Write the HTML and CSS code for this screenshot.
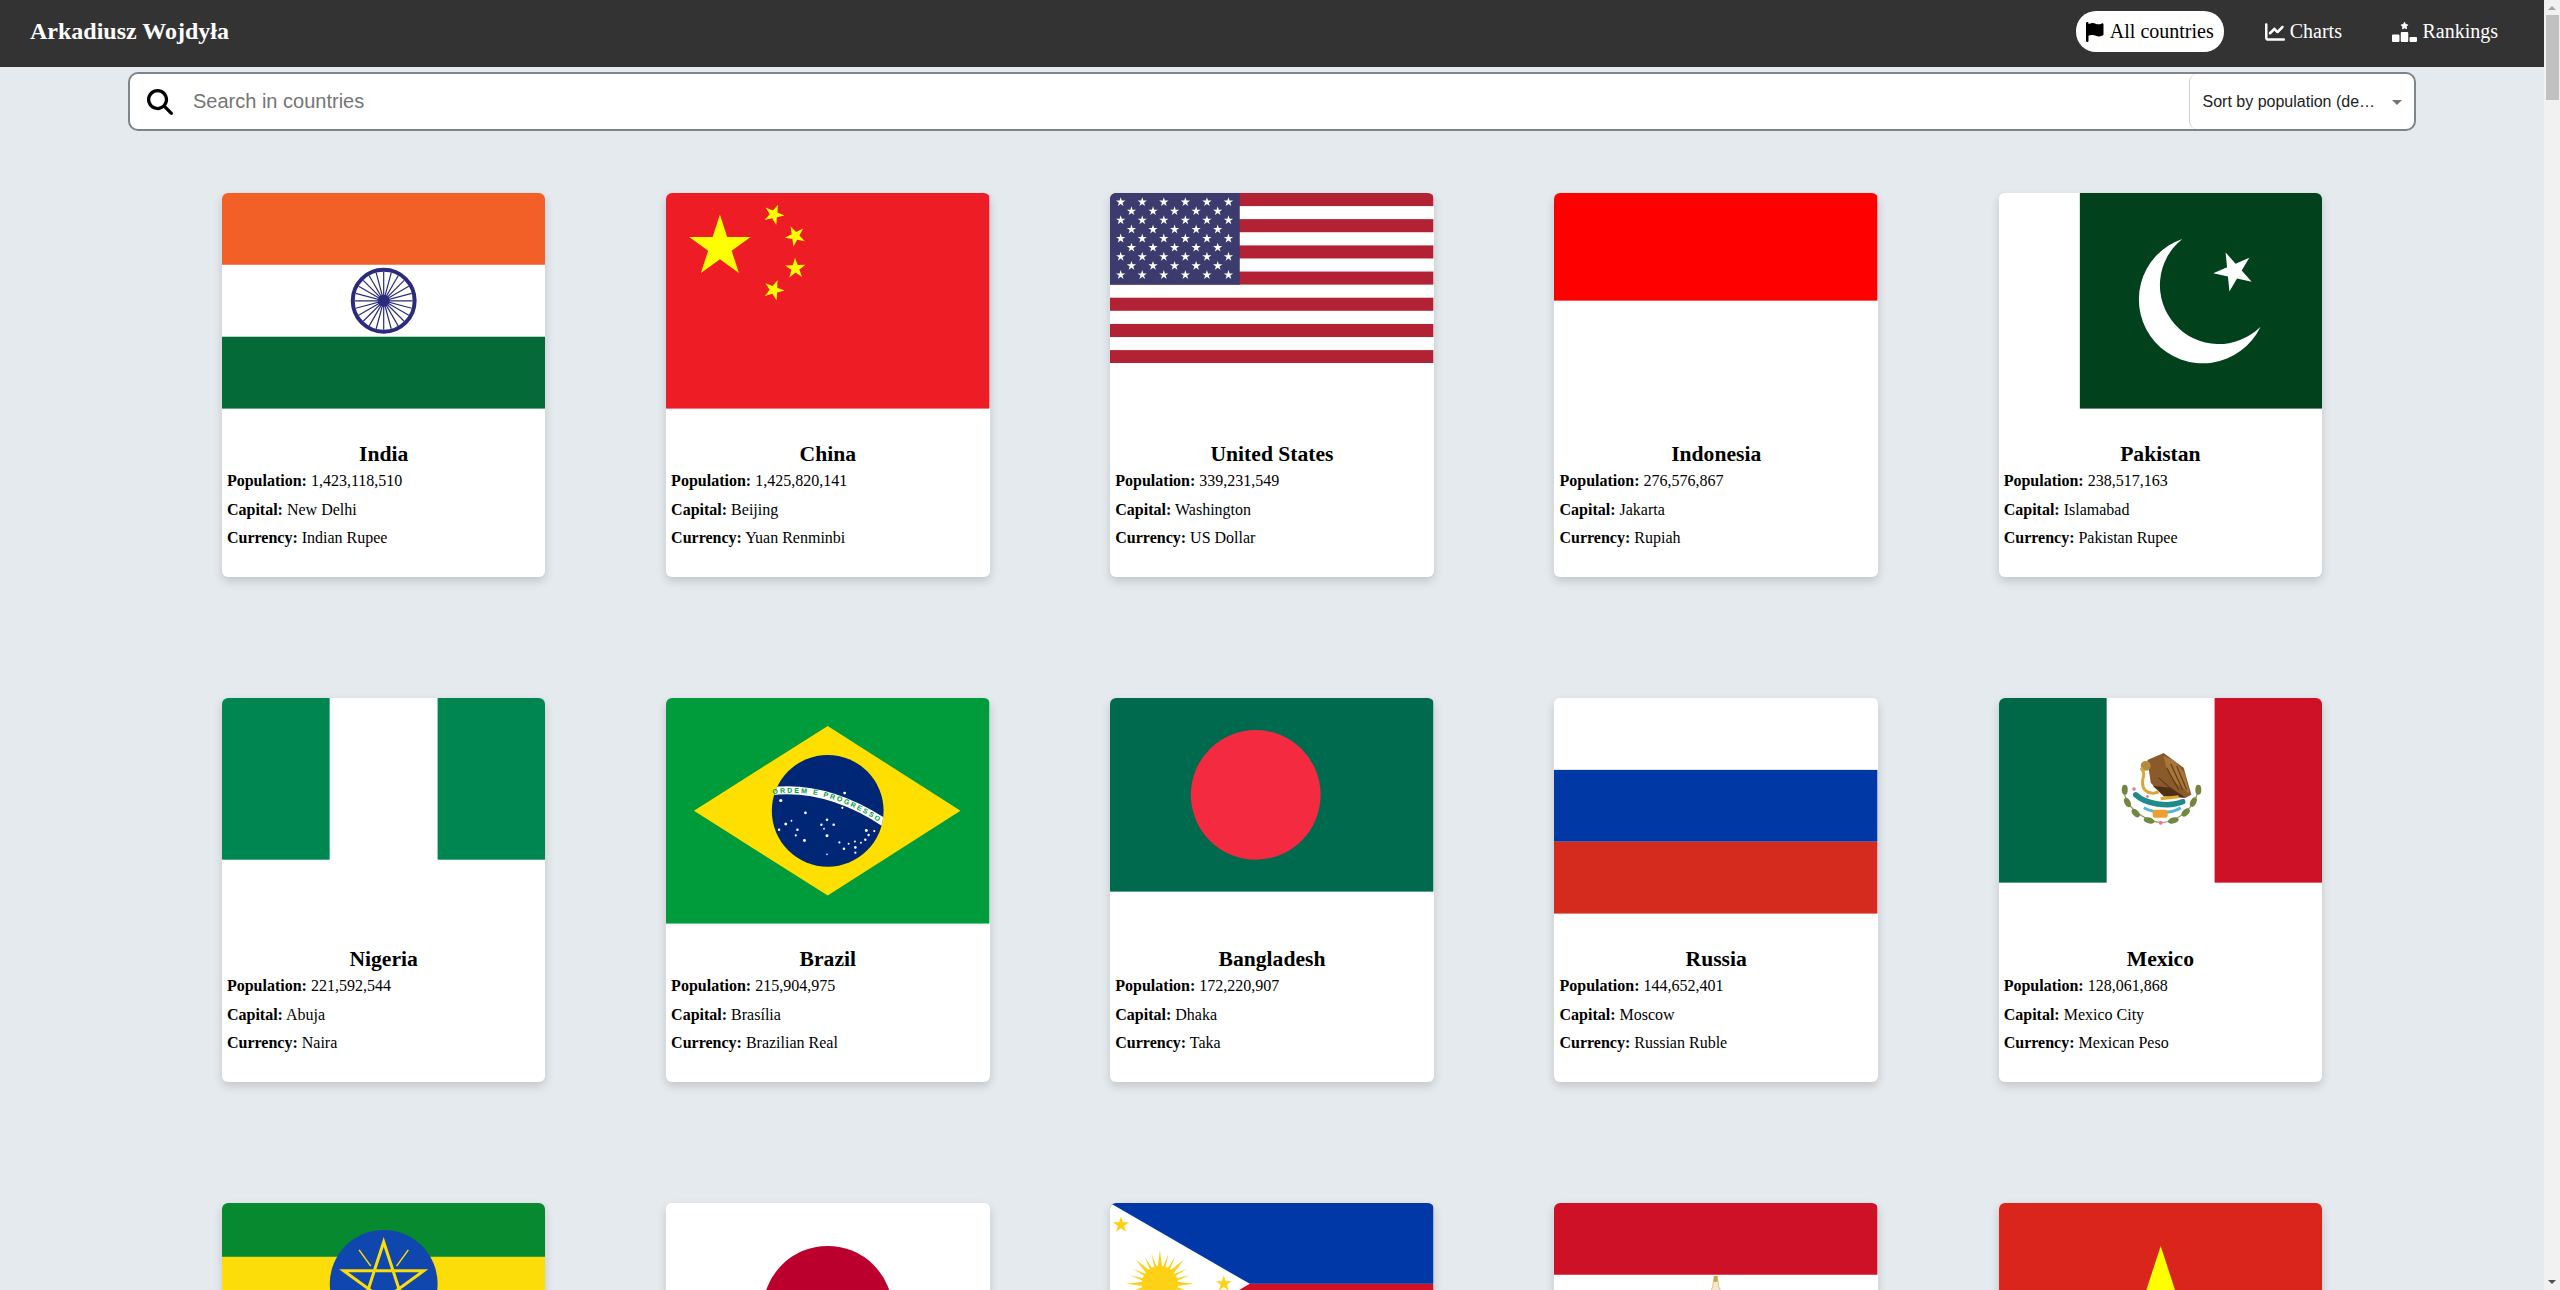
FILE: index.html
```html
<!DOCTYPE html>
<html lang="en">
<head>
<meta charset="utf-8">
<title>Arkadiusz Wojdyła</title>
<link rel="stylesheet" href="styles.css">
</head>
<body>
<svg class="defs" aria-hidden="true">
  <defs>
    <polygon id="star" points="0,-1 .2245,-.309 .9511,-.309 .3633,.118 .5878,.809 0,.382 -.5878,.809 -.3633,.118 -.9511,-.309 -.2245,-.309"/>
    <g id="us-star"><use href="#star" transform="scale(4.9)" fill="#fff"/></g>
    <g id="us-row6">
      <use href="#us-star" x="10.7"/><use href="#us-star" x="32.3"/><use href="#us-star" x="53.9"/><use href="#us-star" x="75.5"/><use href="#us-star" x="97.1"/><use href="#us-star" x="118.7"/>
    </g>
    <g id="us-row5">
      <use href="#us-star" x="21.5"/><use href="#us-star" x="43.1"/><use href="#us-star" x="64.7"/><use href="#us-star" x="86.3"/><use href="#us-star" x="107.9"/>
    </g>
    <g id="ph-ray">
      <polygon points="-2.2,-17 2.2,-17 0,-34"/>
      <polygon points="-5.5,-16.5 -3,-17 -8.5,-30"/>
      <polygon points="3,-17 5.5,-16.5 8.5,-30"/>
    </g>
    <clipPath id="br-globe"><circle cx="162" cy="113" r="56"/></clipPath>
  </defs>
</svg>
<div class="layout">
  <div class="page">
    <header class="navbar">
      <span class="brand">Arkadiusz Wojdyła</span>
      <nav class="nav">
        <a class="nav-link is-active">
          <svg class="nav-icon" width="17.5" height="20" viewBox="0 0 448 512"><path d="M64 32C64 14.3 49.7 0 32 0S0 14.3 0 32V64 368 480c0 17.7 14.3 32 32 32s32-14.3 32-32V352l64.3-16.1c41.1-10.3 84.6-5.5 122.5 13.4c44.2 22.1 95.5 24.8 141.7 7.4l34.7-13c12.5-4.7 20.8-16.6 20.8-30V66.1c0-23-24.2-38-44.8-27.7l-9.6 4.8c-46.3 23.2-100.8 23.2-147.1 0c-35.1-17.6-75.4-22-113.5-12.5L64 48V32z"/></svg>
          All countries
        </a>
        <a class="nav-link">
          <svg class="nav-icon" width="20" height="20" viewBox="0 0 512 512"><path d="M64 64c0-17.7-14.3-32-32-32S0 46.3 0 64V400c0 44.2 35.8 80 80 80H480c17.7 0 32-14.3 32-32s-14.3-32-32-32H80c-8.8 0-16-7.2-16-16V64zm406.6 86.6c12.5-12.5 12.5-32.8 0-45.3s-32.8-12.5-45.3 0L320 210.7l-57.4-57.4c-12.5-12.5-32.8-12.5-45.3 0l-112 112c-12.5 12.5-12.5 32.8 0 45.3s32.8 12.5 45.3 0L240 221.3l57.4 57.4c12.5 12.5 32.8 12.5 45.3 0l128-128z"/></svg>
          Charts
        </a>
        <a class="nav-link">
          <svg class="nav-icon" width="25" height="20" viewBox="0 0 640 512"><path d="M353.8 54.1L330.2 6.3c-3.9-8.3-16.1-8.6-20.4 0L286.2 54.1l-52.3 7.5c-9.3 1.4-13.3 12.9-6.4 19.8l38 37-9 52.1c-1.4 9.3 8.2 16.5 16.8 12.2l46.9-24.8 46.6 24.4c8.6 4.3 18.3-2.9 16.8-12.2l-9-52.1 38-36.6c6.8-6.8 2.9-18.3-6.4-19.8l-52.3-7.5zM256 256c-17.7 0-32 14.3-32 32V480c0 17.7 14.3 32 32 32H384c17.7 0 32-14.3 32-32V288c0-17.7-14.3-32-32-32H256zM32 320c-17.7 0-32 14.3-32 32V480c0 17.7 14.3 32 32 32H160c17.7 0 32-14.3 32-32V352c0-17.7-14.3-32-32-32H32zm416 96v64c0 17.7 14.3 32 32 32H608c17.7 0 32-14.3 32-32V416c0-17.7-14.3-32-32-32H480c-17.7 0-32 14.3-32 32z"/></svg>
          Rankings
        </a>
      </nav>
    </header>

    <div class="search">
      <svg class="search-icon" width="26" height="26" viewBox="0 0 512 512"><path d="M416 208c0 45.900-14.900 88.300-40 122.700L502.600 457.400c12.500 12.500 12.500 32.800 0 45.300s-32.800 12.500-45.300 0L330.700 376c-34.400 25.200-76.800 40-122.700 40C93.100 416 0 322.900 0 208S93.100 0 208 0S416 93.100 416 208zM208 352a144 144 0 1 0 0-288 144 144 0 1 0 0 288z"/></svg>
      <input class="search-input" type="text" placeholder="Search in countries">
      <div class="sort">
        <span class="sort-label">Sort by population (descending)</span>
        <svg class="sort-caret" width="24" height="24" viewBox="0 0 24 24"><path d="M7 10l5 5 5-5z"/></svg>
      </div>
    </div>

    <main class="grid">
      <article class="card">
        <div class="flag-box">
          <svg class="flag" viewBox="0 0 324 216">
            <rect width="324" height="72" fill="#f26027"/><rect y="72" width="324" height="72" fill="#fff"/><rect y="144" width="324" height="72" fill="#046a38"/>
            <circle cx="162" cy="108" r="31" fill="#fff" stroke="#2b2a7c" stroke-width="4"/>
            <g stroke="#2b2a7c" stroke-width="1.2">
              <line x1="162" y1="79" x2="162" y2="137"/>
              <line x1="162" y1="79" x2="162" y2="137" transform="rotate(15 162 108)"/>
              <line x1="162" y1="79" x2="162" y2="137" transform="rotate(30 162 108)"/>
              <line x1="162" y1="79" x2="162" y2="137" transform="rotate(45 162 108)"/>
              <line x1="162" y1="79" x2="162" y2="137" transform="rotate(60 162 108)"/>
              <line x1="162" y1="79" x2="162" y2="137" transform="rotate(75 162 108)"/>
              <line x1="162" y1="79" x2="162" y2="137" transform="rotate(90 162 108)"/>
              <line x1="162" y1="79" x2="162" y2="137" transform="rotate(105 162 108)"/>
              <line x1="162" y1="79" x2="162" y2="137" transform="rotate(120 162 108)"/>
              <line x1="162" y1="79" x2="162" y2="137" transform="rotate(135 162 108)"/>
              <line x1="162" y1="79" x2="162" y2="137" transform="rotate(150 162 108)"/>
              <line x1="162" y1="79" x2="162" y2="137" transform="rotate(165 162 108)"/>
            </g>
            <circle cx="162" cy="108" r="6" fill="#2b2a7c"/>
          </svg>
        </div>
        <h2 class="name">India</h2>
        <p class="fact"><b>Population:</b> 1,423,118,510</p>
        <p class="fact"><b>Capital:</b> New Delhi</p>
        <p class="fact"><b>Currency:</b> Indian Rupee</p>
      </article>

      <article class="card">
        <div class="flag-box">
          <svg class="flag" viewBox="0 0 30 20">
            <rect width="30" height="20" fill="#ee1c25"/>
            <g fill="#ff0">
              <use href="#star" transform="translate(5 5) scale(3)"/>
              <use href="#star" transform="translate(10 2) rotate(-121)"/>
              <use href="#star" transform="translate(12 4) rotate(-98.1)"/>
              <use href="#star" transform="translate(12 7) rotate(-74)"/>
              <use href="#star" transform="translate(10 9) rotate(-51.3)"/>
            </g>
          </svg>
        </div>
        <h2 class="name">China</h2>
        <p class="fact"><b>Population:</b> 1,425,820,141</p>
        <p class="fact"><b>Capital:</b> Beijing</p>
        <p class="fact"><b>Currency:</b> Yuan Renminbi</p>
      </article>

      <article class="card">
        <div class="flag-box">
          <svg class="flag" viewBox="0 0 324 170.5">
            <rect width="324" height="170.5" fill="#fff"/>
            <g fill="#b22234">
              <rect width="324" height="13.1"/><rect y="26.2" width="324" height="13.1"/><rect y="52.5" width="324" height="13.1"/><rect y="78.7" width="324" height="13.1"/><rect y="104.9" width="324" height="13.1"/><rect y="131.2" width="324" height="13.1"/><rect y="157.4" width="324" height="13.1"/>
            </g>
            <rect width="130" height="91.8" fill="#3c3b6e"/>
            <use href="#us-row6" y="9.1"/><use href="#us-row5" y="18.2"/><use href="#us-row6" y="27.3"/><use href="#us-row5" y="36.5"/><use href="#us-row6" y="45.6"/><use href="#us-row5" y="54.7"/><use href="#us-row6" y="63.8"/><use href="#us-row5" y="73"/><use href="#us-row6" y="82.1"/>
          </svg>
        </div>
        <h2 class="name">United States</h2>
        <p class="fact"><b>Population:</b> 339,231,549</p>
        <p class="fact"><b>Capital:</b> Washington</p>
        <p class="fact"><b>Currency:</b> US Dollar</p>
      </article>

      <article class="card">
        <div class="flag-box">
          <svg class="flag" viewBox="0 0 324 216">
            <rect width="324" height="108" fill="#f00"/><rect y="108" width="324" height="108" fill="#fff"/>
          </svg>
        </div>
        <h2 class="name">Indonesia</h2>
        <p class="fact"><b>Population:</b> 276,576,867</p>
        <p class="fact"><b>Capital:</b> Jakarta</p>
        <p class="fact"><b>Currency:</b> Rupiah</p>
      </article>

      <article class="card">
        <div class="flag-box">
          <svg class="flag" viewBox="0 0 324 216">
            <rect width="81" height="216" fill="#fff"/><rect x="81" width="243" height="216" fill="#01411c"/>
            <path d="M183.7 46A64 64 0 1 0 262 134A59 59 0 1 1 183.7 46Z" fill="#fff"/>
            <use href="#star" transform="translate(235.3 78.5) rotate(-23.6) scale(20.7)" fill="#fff"/>
          </svg>
        </div>
        <h2 class="name">Pakistan</h2>
        <p class="fact"><b>Population:</b> 238,517,163</p>
        <p class="fact"><b>Capital:</b> Islamabad</p>
        <p class="fact"><b>Currency:</b> Pakistan Rupee</p>
      </article>

      <article class="card">
        <div class="flag-box">
          <svg class="flag" viewBox="0 0 324 162">
            <rect width="108" height="162" fill="#008751"/><rect x="108" width="108" height="162" fill="#fff"/><rect x="216" width="108" height="162" fill="#008751"/>
          </svg>
        </div>
        <h2 class="name">Nigeria</h2>
        <p class="fact"><b>Population:</b> 221,592,544</p>
        <p class="fact"><b>Capital:</b> Abuja</p>
        <p class="fact"><b>Currency:</b> Naira</p>
      </article>

      <article class="card">
        <div class="flag-box">
          <svg class="flag" viewBox="0 0 324 226">
            <rect width="324" height="226" fill="#009b3a"/>
            <polygon points="28,113 162,28 295,113 162,198" fill="#fedf00"/>
            <circle cx="162" cy="113" r="56" fill="#002776"/>
            <g clip-path="url(#br-globe)">
              <path d="M100 94Q160.5 85 222 127" fill="none" stroke="#fff" stroke-width="8"/>
            </g>
            <path id="br-text" d="M107 96.5Q160.5 87.5 218 127.5" fill="none"/>
            <text class="br-motto"><textPath href="#br-text" textLength="112">ORDEM E PROGRESSO</textPath></text>
            <g fill="#fff">
              <circle cx="115" cy="102.7" r="1.6"/><circle cx="139.7" cy="115" r="1.4"/><circle cx="120" cy="126.3" r="1.5"/><circle cx="125.7" cy="123" r=".9"/><circle cx="113.3" cy="132" r="1.2"/><circle cx="131.7" cy="132" r="1.3"/><circle cx="130" cy="137.7" r="1.1"/><circle cx="138.7" cy="142.7" r="1.5"/>
              <circle cx="161.3" cy="122" r="1.3"/><circle cx="155.7" cy="127" r="1.2"/><circle cx="168" cy="127" r="1.3"/><circle cx="158.3" cy="131" r=".9"/><circle cx="161.3" cy="138" r="1.5"/><circle cx="200.7" cy="132.7" r="1.5"/><circle cx="208.7" cy="133.3" r="1.1"/><circle cx="203" cy="137.3" r="1.2"/><circle cx="199.7" cy="142" r="1.2"/><circle cx="195.3" cy="145" r="1"/>
              <circle cx="189.3" cy="143.7" r="1"/><circle cx="183" cy="146" r="1"/><circle cx="189.7" cy="149.7" r="1.3"/><circle cx="178.3" cy="151" r="1.3"/><circle cx="173.7" cy="144.7" r="1.1"/><circle cx="189.7" cy="155" r="1.1"/><circle cx="161.3" cy="156.7" r=".8"/><circle cx="179" cy="95.3" r="1.4"/><circle cx="176.7" cy="110" r="1.1"/>
            </g>
          </svg>
        </div>
        <h2 class="name">Brazil</h2>
        <p class="fact"><b>Population:</b> 215,904,975</p>
        <p class="fact"><b>Capital:</b> Brasília</p>
        <p class="fact"><b>Currency:</b> Brazilian Real</p>
      </article>

      <article class="card">
        <div class="flag-box">
          <svg class="flag" viewBox="0 0 324 194">
            <rect width="324" height="194" fill="#006a4e"/>
            <circle cx="146" cy="97" r="65" fill="#f42a41"/>
          </svg>
        </div>
        <h2 class="name">Bangladesh</h2>
        <p class="fact"><b>Population:</b> 172,220,907</p>
        <p class="fact"><b>Capital:</b> Dhaka</p>
        <p class="fact"><b>Currency:</b> Taka</p>
      </article>

      <article class="card">
        <div class="flag-box">
          <svg class="flag" viewBox="0 0 324 216">
            <rect width="324" height="72" fill="#fff"/><rect y="72" width="324" height="72" fill="#0039a6"/><rect y="144" width="324" height="72" fill="#d52b1e"/>
          </svg>
        </div>
        <h2 class="name">Russia</h2>
        <p class="fact"><b>Population:</b> 144,652,401</p>
        <p class="fact"><b>Capital:</b> Moscow</p>
        <p class="fact"><b>Currency:</b> Russian Ruble</p>
      </article>

      <article class="card">
        <div class="flag-box">
          <svg class="flag" viewBox="0 0 324 185">
            <rect width="108" height="185" fill="#006847"/><rect x="108" width="108" height="185" fill="#fff"/><rect x="216" width="108" height="185" fill="#ce1126"/>
            <path d="M125 92C127 108 140 121 162 125C180 124 196 110 199.700 92" fill="none" stroke="#8b9a58" stroke-width="1.200"/>
            <g fill="#72863f">
              <ellipse cx="126" cy="92" rx="3" ry="5"/>
              <ellipse cx="128.700" cy="104.700" rx="3" ry="5" transform="rotate(-25 128.700 104.700)"/>
              <ellipse cx="137" cy="115.300" rx="3" ry="5" transform="rotate(-45 137 115.300)"/>
              <ellipse cx="150.300" cy="122.700" rx="5.500" ry="3" transform="rotate(15 150.300 122.700)"/>
              <ellipse cx="174.700" cy="122.700" rx="5.500" ry="3" transform="rotate(-15 174.700 122.700)"/>
              <ellipse cx="187" cy="114.700" rx="3" ry="5" transform="rotate(45 187 114.700)"/>
              <ellipse cx="194.700" cy="104.300" rx="3" ry="5" transform="rotate(25 194.700 104.300)"/>
              <ellipse cx="199.700" cy="92" rx="3" ry="5"/>
            </g>
            <g fill="#e8789a">
              <circle cx="135.300" cy="91.300" r="1.800"/><circle cx="184.700" cy="102.700" r="1.800"/><circle cx="148.700" cy="98.700" r="1.500"/><circle cx="162" cy="125" r="2"/>
            </g>
            <path d="M137 97C146 106 170 110 184 104" fill="none" stroke="#1f8a8c" stroke-width="5.500" stroke-linecap="round"/>
            <path d="M145 110C156 116 174 116 182 110" fill="none" stroke="#55b5dc" stroke-width="3"/>
            <rect x="154" y="112" width="15" height="8" rx="2" fill="#eda02f"/>
            <path d="M148.700 62L165 55L185 70L192.700 97L187 100L165 98.700L152 85Z" fill="#8a5a2b"/>
            <path d="M165 58L176 63L186 76L191 96L176 84L168 72Z" fill="#a9763a"/>
            <path d="M172 66L184 92M178 68L188 92M168 70L180 92M160 80L178 96" fill="none" stroke="#5f3c1c" stroke-width="1.200"/>
            <path d="M154 88L165 98L187 100L172 90Z" fill="#4f2f14"/>
            <circle cx="147" cy="68" r="5" fill="#b48a3c"/>
            <path d="M142 70C150 78 139 82 146 92C150 96 156 96 160 94" fill="none" stroke="#d9a63a" stroke-width="3"/>
            <path d="M162 101L180 99" stroke="#e0a92e" stroke-width="3"/>
          </svg>
        </div>
        <h2 class="name">Mexico</h2>
        <p class="fact"><b>Population:</b> 128,061,868</p>
        <p class="fact"><b>Capital:</b> Mexico City</p>
        <p class="fact"><b>Currency:</b> Mexican Peso</p>
      </article>

      <article class="card">
        <div class="flag-box">
          <svg class="flag" viewBox="0 0 324 162">
            <rect width="324" height="54" fill="#078930"/><rect y="54" width="324" height="54" fill="#fcdd09"/><rect y="108" width="324" height="54" fill="#da121a"/>
            <circle cx="162" cy="81" r="54" fill="#0f47af"/>
            <polygon points="162,39 186.700,115 122,68 202,68 137.300,115" fill="none" stroke="#fcdd09" stroke-width="3"/>
            <g stroke="#fcdd09" stroke-width="1.500">
              <line x1="174.900" y1="63.200" x2="186.700" y2="47"/><line x1="149.100" y1="63.200" x2="137.300" y2="47"/><line x1="182.900" y1="87.800" x2="201.900" y2="94"/><line x1="141.100" y1="87.800" x2="122.100" y2="94"/><line x1="162" y1="103" x2="162" y2="123"/>
            </g>
          </svg>
        </div>
        <h2 class="name">Ethiopia</h2>
        <p class="fact"><b>Population:</b> 123,379,924</p>
        <p class="fact"><b>Capital:</b> Addis Ababa</p>
        <p class="fact"><b>Currency:</b> Ethiopian Birr</p>
      </article>

      <article class="card">
        <div class="flag-box">
          <svg class="flag" viewBox="0 0 324 216">
            <rect width="324" height="216" fill="#fff"/>
            <circle cx="162" cy="108" r="65" fill="#bc002d"/>
          </svg>
        </div>
        <h2 class="name">Japan</h2>
        <p class="fact"><b>Population:</b> 123,951,692</p>
        <p class="fact"><b>Capital:</b> Tokyo</p>
        <p class="fact"><b>Currency:</b> Yen</p>
      </article>

      <article class="card">
        <div class="flag-box">
          <svg class="flag" viewBox="0 0 324 162">
            <rect width="324" height="81" fill="#0038a8"/><rect y="81" width="324" height="81" fill="#ce1126"/>
            <polygon points="0,0 140,81 0,162" fill="#fff"/>
            <g fill="#fcd116">
              <circle cx="50" cy="81" r="18"/>
              <use href="#ph-ray" transform="translate(50 81)"/>
              <use href="#ph-ray" transform="translate(50 81) rotate(45)"/>
              <use href="#ph-ray" transform="translate(50 81) rotate(90)"/>
              <use href="#ph-ray" transform="translate(50 81) rotate(135)"/>
              <use href="#ph-ray" transform="translate(50 81) rotate(180)"/>
              <use href="#ph-ray" transform="translate(50 81) rotate(225)"/>
              <use href="#ph-ray" transform="translate(50 81) rotate(270)"/>
              <use href="#ph-ray" transform="translate(50 81) rotate(315)"/>
              <use href="#star" transform="translate(11 22) scale(8.500)"/>
              <use href="#star" transform="translate(114 81) scale(8.500)"/>
              <use href="#star" transform="translate(11 140) scale(8.500)"/>
            </g>
          </svg>
        </div>
        <h2 class="name">Philippines</h2>
        <p class="fact"><b>Population:</b> 115,559,009</p>
        <p class="fact"><b>Capital:</b> Manila</p>
        <p class="fact"><b>Currency:</b> Philippine Peso</p>
      </article>

      <article class="card">
        <div class="flag-box">
          <svg class="flag" viewBox="0 0 324 216">
            <rect width="324" height="72" fill="#ce1126"/><rect y="72" width="324" height="72" fill="#fff"/><rect y="144" width="324" height="72" fill="#000"/>
            <path d="M160 76H164L165 84L168 90C178 88 184 94 187 100L183 124L170 134H154L141 124L137 100C140 94 146 88 156 90L159 84Z" fill="#f3e9cd" stroke="#dcc48a" stroke-width="1"/>
            <rect x="160" y="73" width="4" height="6" fill="#c9a552"/>
          </svg>
        </div>
        <h2 class="name">Egypt</h2>
        <p class="fact"><b>Population:</b> 110,990,103</p>
        <p class="fact"><b>Capital:</b> Cairo</p>
        <p class="fact"><b>Currency:</b> Egyptian Pound</p>
      </article>

      <article class="card">
        <div class="flag-box">
          <svg class="flag" viewBox="0 0 324 216">
            <rect width="324" height="216" fill="#da251d"/>
            <use href="#star" transform="translate(162 108) scale(65)" fill="#ff0"/>
          </svg>
        </div>
        <h2 class="name">Vietnam</h2>
        <p class="fact"><b>Population:</b> 98,186,856</p>
        <p class="fact"><b>Capital:</b> Hanoi</p>
        <p class="fact"><b>Currency:</b> Dong</p>
      </article>
    </main>
  </div>

  <aside class="scrollbar" aria-hidden="true">
    <span class="scroll-arrow scroll-arrow-up"></span>
    <span class="scroll-thumb"></span>
    <span class="scroll-arrow scroll-arrow-down"></span>
  </aside>
</div>
</body>
</html>
```

FILE: styles.css
```css
* {
  box-sizing: border-box;
}

html,
body {
  margin: 0;
  height: 100%;
  overflow: hidden;
}

body {
  background: #e5eaef;
  color: #000;
  font-family: "Liberation Serif", "Times New Roman", serif;
}

.defs {
  position: absolute;
  width: 0;
  height: 0;
}

.layout {
  display: flex;
  height: 100vh;
}

.page {
  flex: 1;
  min-width: 0;
  overflow: hidden;
}

/* navbar */
.navbar {
  display: flex;
  align-items: center;
  justify-content: space-between;
  height: 67px;
  padding: 0 36px 4px 30px;
  background: #333;
  color: #fff;
}

.brand {
  font-size: 24px;
  font-weight: 700;
}

.nav {
  display: flex;
  align-items: center;
  gap: 30.5px;
}

.nav-link {
  display: flex;
  align-items: center;
  gap: 5px;
  height: 41px;
  padding: 0 10px;
  border-radius: 20px;
  color: #fff;
  font-size: 20px;
}

.nav-link.is-active {
  gap: 6px;
  margin-right: 0.5px;
  background: #fff;
  color: #000;
}

.nav-icon {
  flex: none;
  fill: currentColor;
}

/* search */
.search {
  display: flex;
  align-items: center;
  width: 2288px;
  height: 59px;
  margin: 5px auto 0;
  padding-left: 17px;
  border: 2px solid #7f8489;
  border-radius: 10px;
  background: #fff;
}

.search-icon {
  flex: none;
  fill: #000;
}

.search-input {
  flex: 1;
  min-width: 0;
  height: 100%;
  margin-left: 20px;
  padding: 0;
  border: 0;
  outline: 0;
  background: transparent;
  color: #000;
  font: 20px "Liberation Sans", Arial, sans-serif;
}

.search-input::placeholder {
  color: #757575;
  opacity: 1;
}

.sort {
  display: flex;
  align-items: center;
  flex: none;
  width: 225.5px;
  height: 100%;
  padding-left: 13px;
  border-left: 1px solid #cfd0d2;
  border-radius: 8px;
  color: #212121;
  font: 16px "Liberation Sans", Arial, sans-serif;
}

.sort-label {
  width: 177px;
  overflow: hidden;
  white-space: nowrap;
  text-overflow: ellipsis;
}

.sort-caret {
  flex: none;
  margin-left: 5px;
  fill: #757575;
}

/* cards */
.grid {
  display: grid;
  grid-template-columns: repeat(5, 323.4px);
  justify-content: center;
  gap: 121px 120.8px;
  margin-top: 62px;
}

.card {
  height: 384px;
  border-radius: 6px;
  background: #fff;
  box-shadow: 0 4px 10px rgba(0, 0, 0, 0.16);
  overflow: hidden;
}

.flag-box {
  height: 237px;
}

.flag {
  display: block;
  width: 100%;
}

.br-motto {
  fill: #009b3a;
  font: 700 7px "Liberation Sans", Arial, sans-serif;
}

.name {
  margin: 0;
  padding-top: 12px;
  font-size: 21.6px;
  font-weight: 700;
  line-height: 25px;
  text-align: center;
}

.fact {
  margin: 0;
  padding: 0 5px;
  font-size: 16px;
  line-height: 28.5px;
}

/* scrollbar */
.scrollbar {
  display: flex;
  flex-direction: column;
  align-items: center;
  flex: none;
  width: 16px;
  height: 100%;
  background: #f1f1f1;
}

.scroll-arrow {
  flex: none;
  width: 0;
  height: 0;
  margin: 6px 0;
  border-left: 4px solid transparent;
  border-right: 4px solid transparent;
}

.scroll-arrow-up {
  border-bottom: 4px solid #a3a3a3;
  margin-bottom: 5px;
}

.scroll-arrow-down {
  margin-top: auto;
  border-top: 4px solid #505050;
}

.scroll-thumb {
  width: 13px;
  height: 85px;
  background: #c1c1c1;
}
```
